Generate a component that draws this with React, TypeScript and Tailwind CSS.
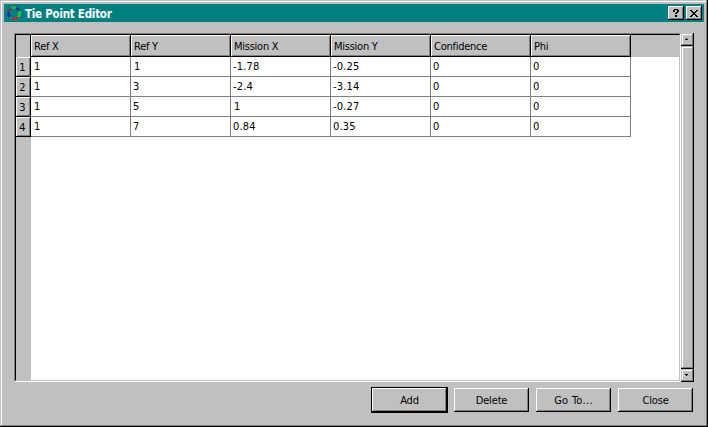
import React from "react";

const columns = ["Ref X", "Ref Y", "Mission X", "Mission Y", "Confidence", "Phi"];
const rows = [
  ["1", "1", "-1.78", "-0.25", "0", "0"],
  ["1", "3", "-2.4", "-3.14", "0", "0"],
  ["1", "5", "1", "-0.27", "0", "0"],
  ["1", "7", "0.84", "0.35", "0", "0"],
];

const raised =
  "bg-[#c0c0c0] shadow-[inset_-1px_-1px_0_#000,inset_1px_1px_0_#fff,inset_-2px_-2px_0_#808080]";

const scrollRaised =
  "bg-[#c0c0c0] shadow-[inset_-1px_-1px_0_#000,inset_1px_1px_0_#c0c0c0,inset_-2px_-2px_0_#808080,inset_2px_2px_0_#fff]";

function TitleButton({ label, children }: { label: string; children: React.ReactNode }) {
  return (
    <button aria-label={label} className={`flex h-[14px] w-4 items-center justify-center ${raised}`}>
      {children}
    </button>
  );
}

function PushButton({ label, primary, wide }: { label: string; primary?: boolean; wide?: boolean }) {
  const spacing = wide ? "tracking-[0.3px]" : "tracking-[-0.15px]";
  const face = (
    <button className={`flex h-6 w-[75px] items-center justify-center pt-px leading-[14px] ${spacing} ${raised}`}>
      {label}
    </button>
  );
  return primary ? <div className="border border-black">{face}</div> : face;
}

function ScrollArrow({ up }: { up?: boolean }) {
  return (
    <div className={`flex h-[13px] w-[13px] shrink-0 items-start justify-center pt-[5px] pr-px ${scrollRaised}`}>
      <svg width="4" height="2" viewBox="0 0 4 2" shapeRendering="crispEdges" aria-hidden="true">
        <path d={up ? "M1 0h1v1h1v1H0V1h1z" : "M0 0h3v1H2v1H1V1H0z"} />
      </svg>
    </div>
  );
}

export default function App() {
  return (
    <div className="flex h-[427px] w-[708px] flex-col bg-[#c0c0c0] pt-1 font-['DejaVu_Sans_Condensed','DejaVu_Sans',sans-serif] text-[11px] text-black [font-stretch:condensed] shadow-[inset_-1px_-1px_0_#000,inset_1px_1px_0_#c0c0c0,inset_-2px_-2px_0_#808080,inset_2px_2px_0_#fff]">
      <header className="mx-1 flex h-[18px] shrink-0 items-center bg-[#008080] pr-[2px] pl-[3px]">
        <svg width="14" height="14" viewBox="0 0 14 14" fill="none" strokeWidth="2.4" aria-hidden="true">
          <path d="M4.2 2.2A5.6 5.6 0 0 1 9.2 1.9" stroke="#20b83c" />
          <path d="M9.2 1.9A5.6 5.6 0 0 1 12.3 5.2" stroke="#2a3098" />
          <path d="M12.3 5.2A5.6 5.6 0 0 1 10.9 11" stroke="#28d032" />
          <path d="M10.9 11A5.6 5.6 0 0 1 5.2 12.3" stroke="#d82430" />
          <path d="M5.2 12.3A5.6 5.6 0 0 1 2.8 10.7" stroke="#209050" />
          <path d="M2.8 10.7A5.6 5.6 0 0 1 1.5 6" stroke="#2424c8" />
          <path d="M1.5 6A5.6 5.6 0 0 1 4.2 2.2" stroke="#803840" />
        </svg>
        <h1 className="ml-1 flex-1 pt-px text-[11.5px] leading-[14px] font-bold tracking-[-0.25px] text-white">
          Tie Point Editor
        </h1>
        <div className="flex gap-[2px]">
          <TitleButton label="Help">
            <svg width="7" height="8" viewBox="0 0 7 8" shapeRendering="crispEdges" aria-hidden="true">
              <path d="M1 0h4v1h1v2H5v1H4v1H2V4h1V3h1V1H2v2H0V1h1zM2 6h2v2H2z" />
            </svg>
          </TitleButton>
          <TitleButton label="Close window">
            <svg width="8" height="7" viewBox="0 0 8 7" shapeRendering="crispEdges" aria-hidden="true">
              <path d="M0 0h2v1h1v1h2V1h1V0h2v1H7v1H6v1H5v1h1v1h1v1h1v1H6V6H5V5H3v1H2v1H0V6h1V5h1V4h1V3H2V2H1V1H0z" />
            </svg>
          </TitleButton>
        </div>
      </header>

      <main className="mt-[11px] ml-[14px] flex h-[349px] w-[680px] shrink-0">
        <div className="flex w-[667px] border border-t-[#808080] border-r-white border-b-white border-l-[#808080]">
          <div className="flex w-full border border-t-black border-r-[#c0c0c0] border-b-[#c0c0c0] border-l-black bg-white">
            <div className="w-[15px] shrink-0 bg-[#c0c0c0]">
              <div className="h-[22px] border-r border-black" />
              {rows.map((_, i) => (
                <div key={i} className={`h-5 pt-1 pr-[2px] text-center leading-[14px] ${raised}`}>
                  {i + 1}
                </div>
              ))}
            </div>
            <div className="flex-1">
              <div className="flex h-[22px] bg-[#c0c0c0]">
                {columns.map((c) => (
                  <div key={c} className={`w-[100px] pt-[5px] pl-[3px] leading-[14px] tracking-[-0.25px] ${raised}`}>
                    {c}
                  </div>
                ))}
              </div>
              {rows.map((row, i) => (
                <div key={i} className="flex h-5">
                  {row.map((v, j) => (
                    <div
                      key={j}
                      className={`w-[100px] border-r border-b border-[#808080] pt-[3px] leading-[14px] tracking-[0.15px] ${v.startsWith("1") ? "pl-[3px]" : "pl-[2px]"}`}
                    >
                      {v}
                    </div>
                  ))}
                </div>
              ))}
            </div>
          </div>
        </div>
        <div className="flex w-[13px] flex-col">
          <ScrollArrow up />
          <div className={`flex-1 ${scrollRaised}`} />
          <ScrollArrow />
        </div>
      </main>

      <footer className="mt-[5px] flex items-center justify-end pr-[15px]">
        <div className="mr-[6px]"><PushButton label="Add" primary /></div>
        <div className="flex gap-[7px]">
          <PushButton label="Delete" />
          <PushButton label="Go To..." wide />
          <PushButton label="Close" />
        </div>
      </footer>
    </div>
  );
}
